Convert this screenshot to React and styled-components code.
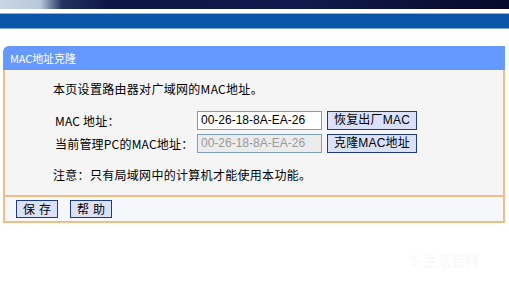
import React from "react";
import styled, { createGlobalStyle } from "styled-components";

const Global = createGlobalStyle`
  html, body { margin: 0; padding: 0; background: #ffffff; }
  body { font-family: "Noto Sans CJK SC", "Liberation Sans", sans-serif; }
  * { box-sizing: border-box; }
`;

const Page = styled.div`
  width: 509px;
  height: 298px;
  overflow: hidden;
  position: relative;
  background: #fff;
`;

const TopBand = styled.div`
  height: 9px;
  background: linear-gradient(90deg, #c9d6e2 0px, #b7c9da 40px, #24345f 62px, #0d1545 110px, #101a4c 300px, #07092a 509px);
`;

const Gap = styled.div`
  height: ${p => p.$h}px;
`;

const BlueBar = styled.div`
  height: 16px;
  background: #0b55a9;
  border-top: 1px solid #8fb3df;
  border-bottom: 1px solid #7fa6d8;
`;

const Panel = styled.div`
  margin: 0 4px 0 3px;
  width: 502px;
`;

const Header = styled.div`
  height: 24px;
  background: #6699ff;
  border-radius: 6px 0 0 0;
  color: #ffffff;
  font-size: 11px;
  line-height: 24px;
  padding-left: 7px;
  letter-spacing: -0.1px;
`;

const Body = styled.div`
  background: #f5f5f5;
  border-left: 2px solid #f2bd82;
  border-right: 2px solid #f2bd82;
  border-bottom: 2px solid #f2bd82;
  padding: 11px 0 0 48px;
  height: 127px;
  font-size: 12px;
  color: #000;
`;

const Line = styled.div`
  height: 16px;
  line-height: 16px;
  letter-spacing: 0.3px;
`;

const Form = styled.div`
  display: grid;
  grid-template-columns: 142px 130px auto;
  row-gap: 4px;
  margin-top: 14px;
  padding-left: 2px;
  align-items: center;
`;

const Label = styled.div`
  font-size: 12px;
  line-height: 19px;
  letter-spacing: 0.2px;
`;

const Input = styled.div`
  width: 125px;
  height: 19px;
  border: 1px solid #7f9db9;
  background: ${p => (p.$disabled ? "#ececec" : "#ffffff")};
  color: ${p => (p.$disabled ? "#9a9a9a" : "#000000")};
  font-family: "Liberation Sans", Arial, sans-serif;
  font-size: 12px;
  line-height: 17px;
  padding-left: 3px;
`;

const Button = styled.div`
  height: 19px;
  padding: 0 4px;
  border: 1px solid #1f3a8a;
  background: #dbe2f7;
  color: #000;
  font-size: 12px;
  line-height: 17px;
  font-family: "Liberation Sans", "Noto Sans CJK SC", sans-serif;
  justify-self: start;
  width: ${p => p.$w}px;
  text-align: center;
  letter-spacing: 0.2px;
`;

const Note = styled.div`
  margin-top: 14px;
  line-height: 16px;
  letter-spacing: 0.3px;
`;

const Footer = styled.div`
  background: #f6f7fa;
  border-left: 2px solid #f2bd82;
  border-right: 2px solid #f2bd82;
  border-bottom: 2px solid #f2bd82;
  height: 26px;
  display: flex;
  align-items: center;
  gap: 12px;
  padding-left: 11px;
`;

const FootButton = styled.div`
  width: 42px;
  height: 18px;
  border: 1px solid #1f3a8a;
  background: #dbe2f7;
  font-size: 12px;
  line-height: 16px;
  text-align: center;
  letter-spacing: 4px;
  padding-left: 4px;
`;

const Watermark = styled.div`
  position: absolute;
  right: 30px;
  bottom: 28px;
  color: #f9f9f9;
  font-size: 14px;
  font-weight: bold;
`;

export default function App() {
  return (
    <Page>
      <Global />
      <TopBand />
      <Gap $h={4} />
      <BlueBar />
      <Gap $h={17} />
      <Panel>
        <Header>MAC地址克隆</Header>
        <Body>
          <Line>本页设置路由器对广域网的MAC地址。</Line>
          <Form>
            <Label>MAC 地址：</Label>
            <Input>00-26-18-8A-EA-26</Input>
            <Button $w={90}>恢复出厂MAC</Button>
            <Label>当前管理PC的MAC地址：</Label>
            <Input $disabled>00-26-18-8A-EA-26</Input>
            <Button $w={90}>克隆MAC地址</Button>
          </Form>
          <Note>注意：只有局域网中的计算机才能使用本功能。</Note>
        </Body>
        <Footer>
          <FootButton>保存</FootButton>
          <FootButton>帮助</FootButton>
        </Footer>
      </Panel>
      <Watermark>S 生活百科</Watermark>
    </Page>
  );
}
